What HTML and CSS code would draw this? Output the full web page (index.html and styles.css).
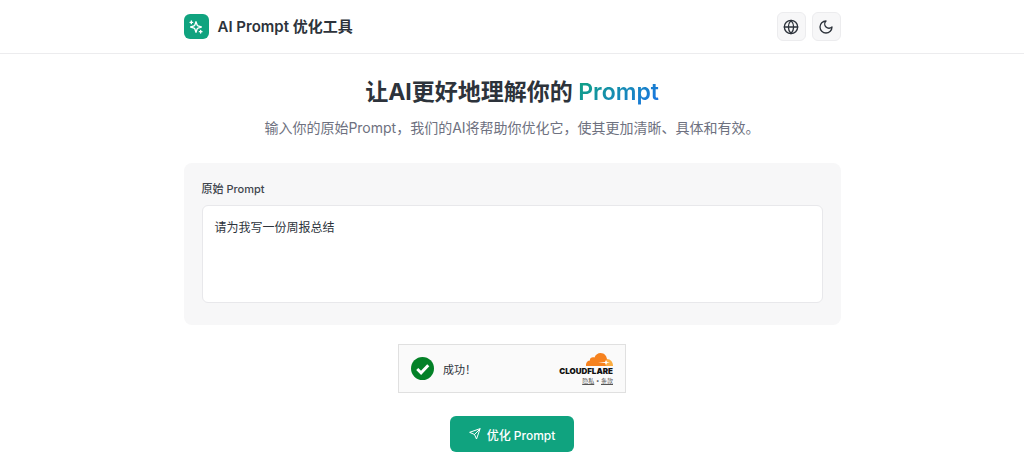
FILE: index.html
```
<!DOCTYPE html>
<html lang="zh-CN">

<head>
    <meta charset="UTF-8">
    <meta name="viewport" content="width=device-width, initial-scale=1.0">
    <title>AI Prompt 优化工具</title>
    <link rel="stylesheet" href="styles.css">
</head>

<body>
    <header class="site-header">
        <div class="container header-inner">
            <div class="brand">
                <span class="brand-logo">
                    <svg class="icon" viewBox="0 0 24 24" aria-hidden="true">
                        <path d="M12 4l-1.700 5a2 2 0 0 1-1.300 1.300L4 12l5 1.700a2 2 0 0 1 1.300 1.300L12 20l1.700-5a2 2 0 0 1 1.300-1.300L20 12l-5-1.700A2 2 0 0 1 13.700 9z"/>
                        <path d="M5 3v4M3 5h4M19 17v4M17 19h4"/>
                    </svg>
                </span>
                <span class="brand-name">AI Prompt 优化工具</span>
            </div>
            <div class="header-actions">
                <button class="icon-btn" type="button" aria-label="语言">
                    <svg class="icon" viewBox="0 0 24 24" aria-hidden="true">
                        <circle cx="12" cy="12" r="10"/>
                        <path d="M2 12h20M12 2a15.300 15.300 0 0 1 4 10 15.300 15.300 0 0 1-4 10 15.300 15.300 0 0 1-4-10 15.300 15.300 0 0 1 4-10z"/>
                    </svg>
                </button>
                <button class="icon-btn" type="button" aria-label="深色模式">
                    <svg class="icon" viewBox="0 0 24 24" aria-hidden="true">
                        <path d="M12 3a6 6 0 0 0 9 9 9 9 0 1 1-9-9z"/>
                    </svg>
                </button>
            </div>
        </div>
    </header>

    <main class="container">
        <section class="hero">
            <h1>让AI更好地理解你的 <span class="gradient-text">Prompt</span></h1>
            <p>输入你的原始Prompt，我们的AI将帮助你优化它，使其更加清晰、具体和有效。</p>
        </section>

        <form class="prompt-form">
            <div class="card">
                <label for="prompt-input">原始 Prompt</label>
                <textarea id="prompt-input">请为我写一份周报总结</textarea>
            </div>

            <div class="captcha">
                <svg class="captcha-check" viewBox="0 0 24 24" aria-hidden="true">
                    <circle cx="12" cy="12" r="12" fill="#038127"/>
                    <path d="M6.500 12.500l4 4 7.500-8" fill="none" stroke="#fff" stroke-width="3"/>
                </svg>
                <span class="captcha-status">成功！</span>
                <div class="captcha-brand">
                    <svg class="captcha-cloud" viewBox="0 0 54 26" aria-hidden="true">
                        <path fill="#f6821f" d="M0 26c-1-6 3-11 8-11-1-5 4-8 9-6C19 3 24 0 29 0c8 0 12 6 13 12l-2 14z"/>
                        <path fill="#fbad41" d="M39 26l3-14c7 0 12 6 12 14z"/>
                        <path fill="#fff" d="M24 19l14-1 2-4 2 4 6 1-6 1-2 4-2-4z"/>
                    </svg>
                    <span class="captcha-name">CLOUDFLARE</span>
                    <span class="captcha-links"><a href="#privacy">隐私</a> • <a href="#terms">条款</a></span>
                </div>
            </div>

            <button class="submit-btn" type="button">
                <svg class="icon" viewBox="0 0 24 24" aria-hidden="true">
                    <path d="M22 2L15 22l-4-9-9-4zM22 2L11 13"/>
                </svg>
                优化 Prompt
            </button>
        </form>
    </main>
</body>

</html>
```
FILE: styles.css
```
* {
    box-sizing: border-box;
}

body {
    margin: 0;
    font-family: Inter, "Noto Sans CJK SC", sans-serif;
    color: #2d333b;
    background-color: #fff;
}

button,
textarea {
    font-family: inherit;
}

.container {
    width: 100%;
    max-width: 689px;
    margin: 0 auto;
    padding: 0 16px;
}

.icon {
    width: 16px;
    height: 16px;
    fill: none;
    stroke: currentColor;
    stroke-width: 2;
    stroke-linecap: round;
    stroke-linejoin: round;
}

.site-header {
    border-bottom: 1px solid #ececee;
}

.header-inner {
    display: flex;
    justify-content: space-between;
    align-items: center;
    padding-top: 12px;
    padding-bottom: 12px;
}

.brand {
    display: flex;
    align-items: center;
    gap: 9px;
}

.brand-logo {
    display: flex;
    justify-content: center;
    align-items: center;
    width: 25px;
    height: 25px;
    border-radius: 6px;
    color: #fff;
    background-color: #10a37f;
}

.brand-name {
    font-size: 15px;
    font-weight: 600;
    line-height: 24px;
}

.header-actions {
    display: flex;
    gap: 6px;
}

.icon-btn {
    display: flex;
    justify-content: center;
    align-items: center;
    width: 29px;
    height: 29px;
    padding: 0;
    border: 1px solid #ececee;
    border-radius: 6px;
    color: #2d333b;
    background-color: #f7f7f8;
    cursor: pointer;
}

.hero {
    padding: 24px 0 23px;
    text-align: center;
}

.hero h1 {
    margin: 0 0 10px;
    font-size: 23px;
    font-weight: 700;
    line-height: 28px;
}

.gradient-text {
    font-weight: 600;
    color: transparent;
    background: linear-gradient(135deg, #10a37f, #1a73e8);
    -webkit-background-clip: text;
    background-clip: text;
}

.hero p {
    margin: 0;
    font-size: 14px;
    line-height: 24px;
    color: #6e7180;
}

.prompt-form {
    display: flex;
    flex-direction: column;
    align-items: center;
}

.card {
    width: 100%;
    padding: 18px 18px 22px;
    border-radius: 8px;
    background-color: #f7f7f8;
}

.card label {
    display: block;
    margin-bottom: 8px;
    font-size: 11px;
    font-weight: 500;
    line-height: 16px;
    color: #40454d;
}

.card textarea {
    display: block;
    width: 100%;
    height: 98px;
    padding: 12px;
    border: 1px solid #e8e8eb;
    border-radius: 6px;
    font-size: 12px;
    line-height: 20px;
    color: #2d333b;
    background-color: #fff;
    outline: none;
    resize: none;
}

.captcha {
    display: flex;
    align-items: center;
    width: 228px;
    height: 49px;
    margin: 19px 0 23px;
    padding: 0 12px;
    border: 1px solid #e0e0e0;
    background-color: #fafafa;
}

.captcha-check {
    width: 23px;
    height: 23px;
    margin-right: 9px;
}

.captcha-status {
    font-size: 11px;
}

.captcha-brand {
    display: flex;
    flex-direction: column;
    align-items: flex-end;
    margin-left: auto;
}

.captcha-cloud {
    width: 27px;
    height: 13px;
}

.captcha-name {
    font-size: 8px;
    font-weight: 900;
    line-height: 10px;
    color: #111;
}

.captcha-links {
    font-size: 6px;
    line-height: 9px;
    color: #555;
}

.captcha-links a {
    color: inherit;
}

.submit-btn {
    display: flex;
    align-items: center;
    gap: 6px;
    height: 36px;
    padding: 0 19px;
    border: none;
    border-radius: 6px;
    font-size: 12px;
    font-weight: 500;
    color: #fff;
    background-color: #10a37f;
    cursor: pointer;
}

.submit-btn .icon {
    width: 12px;
    height: 12px;
}
```
